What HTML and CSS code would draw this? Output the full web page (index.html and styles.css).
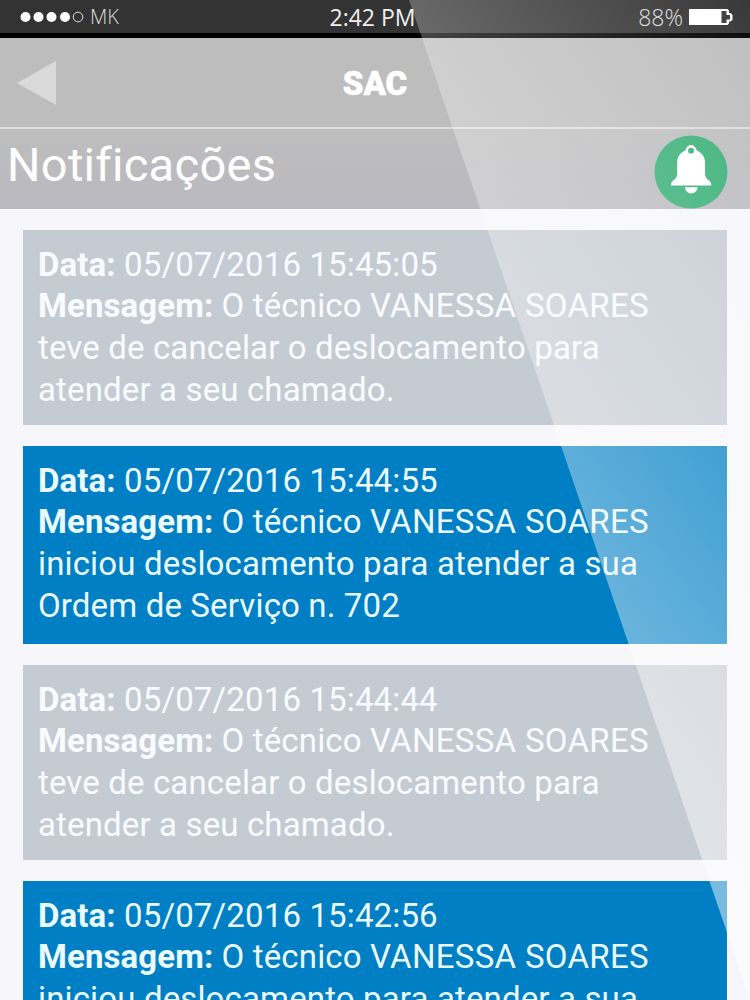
FILE: index.html
```
<!DOCTYPE html>
<html lang="pt-BR">
<head>
<meta charset="utf-8">
<title>SAC</title>
<link rel="stylesheet" href="styles.css">
</head>
<body>
<div class="phone">
  <div class="status">
    <div class="carrier">
      <svg class="signal" width="64" height="12" viewBox="0 0 64 12"><g fill="#fff"><circle cx="5.5" cy="6" r="5"/><circle cx="18.5" cy="6" r="5"/><circle cx="31.5" cy="6" r="5"/><circle cx="45" cy="6" r="5"/></g><circle cx="58" cy="6" r="4.8" fill="none" stroke="#ddd" stroke-width="1"/></svg>
      <span class="network">MK</span>
    </div>
    <div class="clock">2:42 PM</div>
    <div class="power">
      <span class="percent">88%</span>
      <svg class="battery" width="44" height="18" viewBox="0 0 44 18"><path fill="#fff" d="M0 1h38.500l1.500 1.500v2.500h1.500l2 2v5l-2 1.500H40v2L38.500 17H0z"/><path fill="#393939" d="M32.500 3H37.500v4h3.500v4.500h-3.500V15h-5z"/></svg>
    </div>
  </div>
  <header class="navbar">
    <svg class="back" width="40" height="46" viewBox="0 0 40 46"><path fill="#dadada" d="M0 23L39 1v44z"/></svg>
    <h1 class="title">SAC</h1>
  </header>
  <div class="section">
    <h2 class="heading">Notificações</h2>
    <svg class="bell" width="74" height="74" viewBox="0 0 74 74"><circle cx="37" cy="37" r="36.500" fill="#36af75"/><path fill="#fff" d="M37 10c3.200 0 4.700 2.500 5.800 5.500 5.700 2.500 8.200 6.500 8.200 12v9c0 5.500 1 7 4 9 1.500 1 2.200 2.500 2.200 5H17c0-2.500.7-4 2.200-5 3-2 4-3.500 4-9v-9c0-5.500 2.500-9.500 8-12 1.100-3 2.600-5.500 5.800-5.500z"/><circle cx="37" cy="15.700" r="2.900" fill="#36af75"/><path fill="#fff" d="M31 52.300h12.500c-.5 4-3 6.200-6.200 6.200s-5.800-2.200-6.300-6.200z"/></svg>
  </div>
  <main class="list">
    <article class="card read">
      <p><b>Data:</b> 05/07/2016 15:45:05</p>
      <p><b>Mensagem:</b> O técnico <span class="name">VANESSA SOARES</span></p>
      <p>teve de cancelar o deslocamento para</p>
      <p>atender a seu chamado.</p>
    </article>
    <article class="card unread">
      <p><b>Data:</b> 05/07/2016 15:44:55</p>
      <p><b>Mensagem:</b> O técnico <span class="name">VANESSA SOARES</span></p>
      <p>iniciou deslocamento para atender a sua</p>
      <p>Ordem de Serviço n. 702</p>
    </article>
    <article class="card read">
      <p><b>Data:</b> 05/07/2016 15:44:44</p>
      <p><b>Mensagem:</b> O técnico <span class="name">VANESSA SOARES</span></p>
      <p>teve de cancelar o deslocamento para</p>
      <p>atender a seu chamado.</p>
    </article>
    <article class="card unread">
      <p><b>Data:</b> 05/07/2016 15:42:56</p>
      <p><b>Mensagem:</b> O técnico <span class="name">VANESSA SOARES</span></p>
      <p>iniciou deslocamento para atender a sua</p>
    </article>
  </main>
  <div class="glare"></div>
</div>
</body>
</html>
```
FILE: styles.css
```
* { box-sizing: border-box; }
body { margin: 0; }
h1, h2, p { margin: 0; }
svg { display: block; flex: none; }
.phone {
  position: relative;
  width: 750px;
  height: 1000px;
  overflow: hidden;
  background: #f7f7fb;
  font-family: Roboto, sans-serif;
  color: #fff;
}
.status {
  display: grid;
  grid-template-columns: 1fr auto 1fr;
  align-items: center;
  height: 38px;
  padding: 0 17px 0 20px;
  background: #333;
  border-bottom: 5px solid #000;
  font-family: "Open Sans", sans-serif;
}
.carrier, .power { display: flex; align-items: center; }
.power { justify-content: flex-end; gap: 6px; }
.carrier { gap: 6px; }
.network { font-size: 20px; font-weight: 300; line-height: 30px; color: #ddd; }
.clock { font-size: 23px; line-height: 30px; color: #f0f0f0; margin-right: 8px; }
.percent { font-size: 23px; font-weight: 300; line-height: 30px; color: #ddd; }
.navbar {
  display: grid;
  grid-template-columns: 40px 1fr 40px;
  align-items: center;
  height: 91px;
  padding: 1px 17px 0;
  background: #bdbdbd;
  border-bottom: 2px solid #dedede;
}
.title { font-size: 33px; font-weight: 900; text-align: center; line-height: 40px; padding-top: 1px; -webkit-text-stroke: 0.6px #fff; }
.section {
  display: flex;
  justify-content: space-between;
  align-items: flex-start;
  height: 80px;
  padding: 6px 22px 0 7px;
  background: linear-gradient(#bdbdbd, #babac0);
}
.heading { font-size: 47px; font-weight: 400; line-height: 60px; letter-spacing: 0.3px; }
.list { display: flex; flex-direction: column; gap: 21px; padding: 21px 23px 0; }
.card { height: 195px; padding: 13.5px 15px 0; font-size: 33px; line-height: 41.7px; letter-spacing: 0.14px; white-space: nowrap; }
.card b { font-weight: 700; letter-spacing: 0.1px; }
.name { letter-spacing: 0.3px; }
.read { background: #c5cbd3; color: #f8fbff; }
.unread { height: 198px; background: #007fc4; color: #eafaff; }
.glare {
  position: absolute;
  inset: 0;
  pointer-events: none;
  clip-path: polygon(409px 0, 750px 0, 750px 1000px);
  background: linear-gradient(234.5deg, rgba(255, 255, 255, .03), #fff);
}
```
